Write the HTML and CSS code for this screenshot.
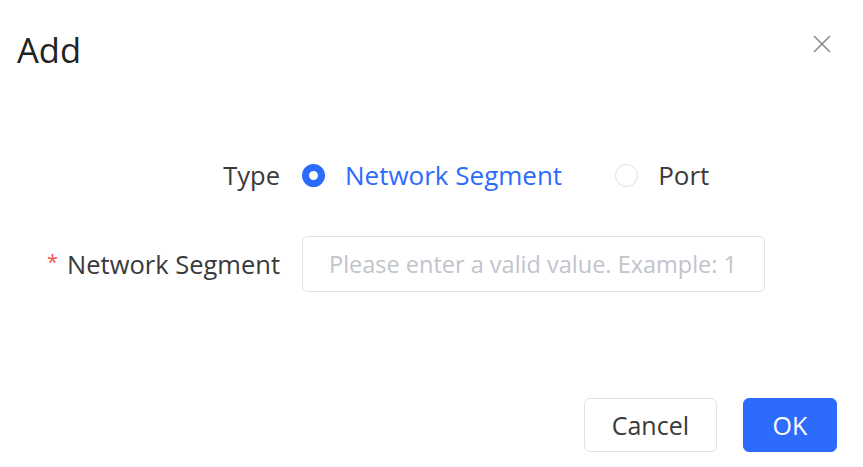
FILE: index.html
```html
<!DOCTYPE html>
<html lang="en">
<head>
    <meta charset="UTF-8">
    <meta name="viewport" content="width=device-width, initial-scale=1.0">
    <title>Add</title>
    <link rel="stylesheet" href="styles.css">
</head>
<body>
    <div class="dialog">
        <div class="dialog-header">
            <h2 class="dialog-title">Add</h2>
            <button class="close" aria-label="Close">
                <svg width="18" height="18" viewBox="0 0 18 18">
                    <path d="M1 1 L17 17 M17 1 L1 17" stroke="#8a8a8a" stroke-width="1.6" fill="none"/>
                </svg>
            </button>
        </div>

        <form class="form">
            <label class="form-label">Type</label>
            <div class="radios">
                <label class="radio checked">
                    <span class="radio-dot"></span>
                    <span>Network Segment</span>
                </label>
                <label class="radio">
                    <span class="radio-dot"></span>
                    <span>Port</span>
                </label>
            </div>

            <label class="form-label" for="segment"><span class="req">*</span>Network Segment</label>
            <input class="text-input" id="segment" type="text" placeholder="Please enter a valid value. Example: 1">
        </form>

        <div class="dialog-footer">
            <button class="btn">Cancel</button>
            <button class="btn btn-primary">OK</button>
        </div>
    </div>
</body>
</html>
```

FILE: styles.css
```css
* {
    margin: 0;
    padding: 0;
    box-sizing: border-box;
}

body {
    font-family: "Open Sans", "Liberation Sans", sans-serif;
    background-color: white;
    color: #3a3a3a;
}

.dialog {
    width: 863px;
    height: 467px;
    display: flex;
    flex-direction: column;
}

.dialog-header {
    display: flex;
    justify-content: space-between;
    align-items: flex-start;
    padding: 27px 32px 0 17px;
}

.dialog-title {
    font-size: 34.5px;
    font-weight: normal;
    color: #222;
    line-height: 46px;
}

.close {
    border: none;
    background: none;
    margin-top: 8px;
    cursor: pointer;
}

.form {
    display: grid;
    grid-template-columns: 280px 463px;
    grid-auto-rows: 56px;
    column-gap: 22px;
    row-gap: 33px;
    margin-top: 74px;
}

.form-label {
    display: flex;
    align-items: center;
    justify-content: flex-end;
    font-size: 25.5px;
    color: #3a3a3a;
}

.req {
    color: #f0504a;
    font-size: 20px;
    margin-right: 9px;
    margin-top: -6px;
}

.radios {
    display: flex;
    align-items: center;
    gap: 53px;
    font-size: 26px;
}

.radio {
    display: flex;
    align-items: center;
    gap: 20px;
    cursor: pointer;
}

.radio-dot {
    width: 23px;
    height: 23px;
    border-radius: 50%;
    border: 1.5px solid #dcdfe6;
}

.radio.checked {
    color: #2d6bfd;
}

.radio.checked .radio-dot {
    border: 7px solid #2d6bfd;
}

.text-input {
    width: 463px;
    height: 56px;
    border: 1.5px solid #e1e2ea;
    border-radius: 6px;
    padding: 0 26px;
    font-family: inherit;
    font-size: 23.5px;
    outline: none;
}

.text-input::placeholder {
    color: #c2c4cc;
}

.dialog-footer {
    display: flex;
    justify-content: flex-end;
    gap: 26px;
    margin-top: auto;
    padding: 0 26px 15px 0;
}

.btn {
    min-width: 94px;
    height: 54px;
    padding: 0 27px;
    border: 1.5px solid #e1e2ea;
    border-radius: 6px;
    background-color: white;
    color: #3a3a3a;
    font-family: inherit;
    font-size: 25px;
    cursor: pointer;
}

.btn-primary {
    background-color: #2d6bfd;
    border-color: #2d6bfd;
    color: white;
}
```
